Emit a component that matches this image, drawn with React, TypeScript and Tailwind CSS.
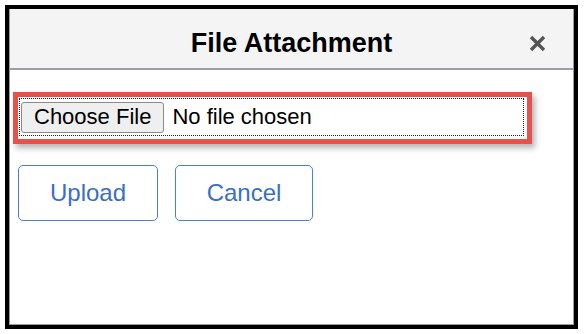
import React from "react";

export default function App() {
  return (
    <div className="w-[586px] h-[334px] bg-white pt-[5px] pl-[5px] font-['Liberation_Sans',Arial,sans-serif]">
      <div className="w-[573px] h-[324px] border-4 border-black">
        <div className="h-full border-l border-r border-b border-[#9a9a9a] flex flex-col">
          <div className="relative h-[61px] bg-[#f4f4f4] border-b-2 border-[#9aa0a4] flex justify-center">
            <div className="mt-[19px] text-[27px] leading-[30px] font-bold text-black">File Attachment</div>
            <svg
              className="absolute right-[27px] top-[26px]"
              width="17"
              height="17"
              viewBox="0 0 17 17"
            >
              <path d="M2 2 L15 15 M15 2 L2 15" stroke="#555" strokeWidth="3.4" strokeLinecap="butt" />
            </svg>
          </div>
          <div className="flex flex-col pt-[22px]">
            <div className="ml-[3px] w-[519px] h-[52px] border-[5px] border-[#e4524c] pt-px pl-px pr-[3px] shadow-[3px_4px_6px_rgba(0,0,0,0.3)]">
              <div className="h-[38px] border border-dotted border-[#222] flex items-center">
                <div className="ml-px h-[31px] px-[12px] bg-[#efefef] border border-[#8a8a8a] rounded-[3px] flex items-center text-[22px] text-black leading-none">
                  Choose File
                </div>
                <div className="ml-[8px] text-[22px] text-black leading-none">No file chosen</div>
              </div>
            </div>
            <div className="flex gap-[17px] ml-[8px] mt-[21px]">
              <div className="w-[140px] h-[56px] border-[1.5px] border-[#4a80d6] rounded-[5px] flex items-center justify-center text-[24px] text-[#3a6fc4]">
                Upload
              </div>
              <div className="w-[138px] h-[56px] border-[1.5px] border-[#4a80d6] rounded-[5px] flex items-center justify-center text-[24px] text-[#3a6fc4]">
                Cancel
              </div>
            </div>
          </div>
        </div>
      </div>
    </div>
  );
}
